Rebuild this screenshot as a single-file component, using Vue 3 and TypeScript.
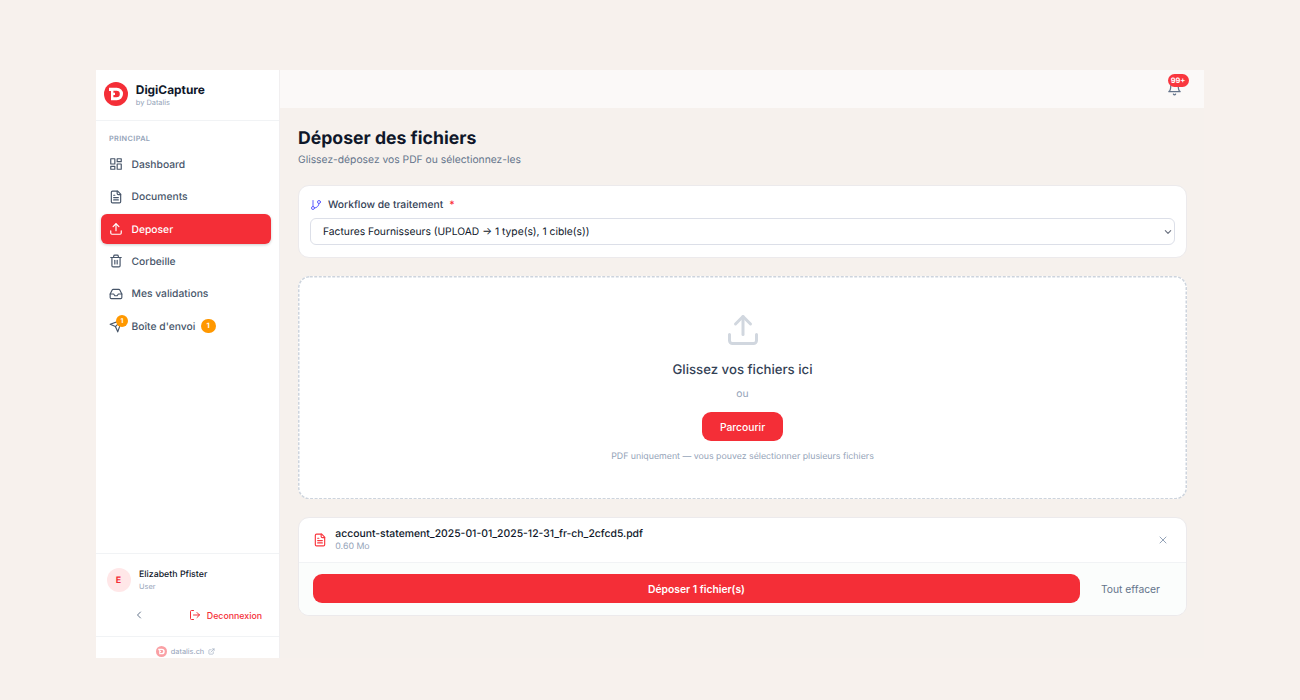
<script setup lang="ts">
import {ref} from "vue";

interface NavItem {
    label: string;
    icon: string[];
    badge?: number;
}

interface UploadFile {
    name: string;
    size: string;
}

const logoPath = "M5 5.800H12.800A6.200 6.200 0 0 1 12.800 18.200H7V9H5ZM9.400 8.800V10.800H11V13H9.400V15.200H12.600A3.200 3.200 0 0 0 12.600 8.800Z";

const iconDocument = [
    "M15 2H6a2 2 0 0 0-2 2v16a2 2 0 0 0 2 2h12a2 2 0 0 0 2-2V7Z",
    "M14 2v4a2 2 0 0 0 2 2h4",
    "M10 9H8",
    "M16 13H8",
    "M16 17H8",
];
const iconUpload = [
    "M21 15v4a2 2 0 0 1-2 2H5a2 2 0 0 1-2-2v-4",
    "M17 8l-5-5-5 5",
    "M12 3v12",
];

const navItems: NavItem[] = [
    {
        label: "Dashboard",
        icon: [
            "M3 3h7v9H3z",
            "M14 3h7v5h-7z",
            "M14 12h7v9h-7z",
            "M3 16h7v5H3z",
        ],
    },
    {label: "Documents", icon: iconDocument},
    {label: "Deposer", icon: iconUpload},
    {
        label: "Corbeille",
        icon: [
            "M3 6h18",
            "M19 6v14a2 2 0 0 1-2 2H7a2 2 0 0 1-2-2V6",
            "M8 6V4a2 2 0 0 1 2-2h4a2 2 0 0 1 2 2v2",
            "M10 11v6",
            "M14 11v6",
        ],
    },
    {
        label: "Mes validations",
        icon: [
            "M22 12h-6l-2 3h-4l-2-3H2",
            "M5.45 5.11 2 12v6a2 2 0 0 0 2 2h16a2 2 0 0 0 2-2v-6l-3.45-6.89A2 2 0 0 0 16.76 4H7.24a2 2 0 0 0-1.79 1.11z",
        ],
    },
    {
        label: "Boîte d'envoi",
        icon: ["m22 2-7 20-4-9-9-4Z", "M22 2 11 13"],
        badge: 1,
    },
];

const active = ref<string>("Deposer");
const workflow = ref<string>("Factures Fournisseurs (UPLOAD → 1 type(s), 1 cible(s))");
const files = ref<UploadFile[]>([
    {name: "account-statement_2025-01-01_2025-12-31_fr-ch_2cfcd5.pdf", size: "0.60 Mo"},
]);

function removeFile(index: number) {
    files.value.splice(index, 1);
}
</script>

<template>
    <div class="page">
        <div class="app">
            <aside class="sidebar">
                <div class="brand">
                    <svg class="brand-logo" viewBox="0 0 24 24">
                        <circle cx="12" cy="12" r="12" fill="#f42e37" />
                        <path :d="logoPath" fill="#fff" fill-rule="evenodd" />
                    </svg>
                    <div class="brand-text">
                        <div class="brand-name">DigiCapture</div>
                        <div class="brand-by">by Datalis</div>
                    </div>
                </div>
                <nav class="nav">
                    <div class="nav-title">PRINCIPAL</div>
                    <a
                        v-for="item in navItems"
                        :key="item.label"
                        class="nav-item"
                        :class="{active: item.label === active}"
                        @click="active = item.label"
                    >
                        <span class="nav-icon">
                            <svg class="icon" viewBox="0 0 24 24">
                                <path v-for="d in item.icon" :key="d" :d="d" />
                            </svg>
                            <span v-if="item.badge" class="icon-badge">{{ item.badge }}</span>
                        </span>
                        <span class="nav-label">{{ item.label }}</span>
                        <span v-if="item.badge" class="nav-badge">{{ item.badge }}</span>
                    </a>
                </nav>
                <div class="account">
                    <div class="user">
                        <div class="avatar">E</div>
                        <div>
                            <div class="user-name">Elizabeth Pfister</div>
                            <div class="user-role">User</div>
                        </div>
                    </div>
                    <div class="account-actions">
                        <button class="collapse">
                            <svg class="icon" viewBox="0 0 24 24"><path d="m15 18-6-6 6-6" /></svg>
                        </button>
                        <button class="logout">
                            <svg class="icon" viewBox="0 0 24 24">
                                <path d="M9 21H5a2 2 0 0 1-2-2V5a2 2 0 0 1 2-2h4" />
                                <path d="m16 17 5-5-5-5" />
                                <path d="M21 12H9" />
                            </svg>
                            Deconnexion
                        </button>
                    </div>
                </div>
                <div class="site">
                    <svg class="site-logo" viewBox="0 0 24 24">
                        <circle cx="12" cy="12" r="12" fill="#f42e37" />
                        <path :d="logoPath" fill="#fff" fill-rule="evenodd" />
                    </svg>
                    <span>datalis.ch</span>
                    <svg class="icon site-link" viewBox="0 0 24 24">
                        <path d="M15 3h6v6" />
                        <path d="M10 14 21 3" />
                        <path d="M18 13v6a2 2 0 0 1-2 2H5a2 2 0 0 1-2-2V8a2 2 0 0 1 2-2h6" />
                    </svg>
                </div>
            </aside>

            <div class="content">
                <header class="topbar">
                    <div class="bell">
                        <svg class="icon" viewBox="0 0 24 24">
                            <path d="M6 8a6 6 0 0 1 12 0c0 7 3 9 3 9H3s3-2 3-9" />
                            <path d="M10.300 21a1.940 1.940 0 0 0 3.400 0" />
                        </svg>
                        <span class="bell-badge">99+</span>
                    </div>
                </header>
                <main class="main">
                    <h1>Déposer des fichiers</h1>
                    <p class="subtitle">Glissez-déposez vos PDF ou sélectionnez-les</p>

                    <section class="card workflow">
                        <div class="workflow-label">
                            <svg class="icon" viewBox="0 0 24 24">
                                <path d="M6 3v12" />
                                <circle cx="18" cy="6" r="3" />
                                <circle cx="6" cy="18" r="3" />
                                <path d="M18 9a9 9 0 0 1-9 9" />
                            </svg>
                            <span>Workflow de traitement</span>
                            <span class="required">*</span>
                        </div>
                        <div class="select">
                            <span>{{ workflow }}</span>
                            <svg class="icon" viewBox="0 0 24 24"><path d="m4 8 8 8 8-8" /></svg>
                        </div>
                    </section>

                    <section class="dropzone">
                        <svg class="dropzone-border"><rect x="0.750" y="0.750" rx="11" /></svg>
                        <svg class="icon dropzone-icon" viewBox="0 0 24 24">
                            <path v-for="d in iconUpload" :key="d" :d="d" />
                        </svg>
                        <div class="dropzone-title">Glissez vos fichiers ici</div>
                        <div class="dropzone-or">ou</div>
                        <button class="browse">Parcourir</button>
                        <div class="dropzone-hint">PDF uniquement — vous pouvez sélectionner plusieurs fichiers</div>
                    </section>

                    <section class="card files">
                        <div v-for="(file, index) in files" :key="file.name" class="file">
                            <svg class="icon file-icon" viewBox="0 0 24 24">
                                <path v-for="d in iconDocument" :key="d" :d="d" />
                            </svg>
                            <div class="file-info">
                                <div class="file-name">{{ file.name }}</div>
                                <div class="file-size">{{ file.size }}</div>
                            </div>
                            <button class="remove" @click="removeFile(index)">
                                <svg class="icon" viewBox="0 0 24 24"><path d="M18 6 6 18M6 6l12 12" /></svg>
                            </button>
                        </div>
                        <div class="files-actions">
                            <button class="submit">Déposer {{ files.length }} fichier(s)</button>
                            <button class="clear" @click="files = []">Tout effacer</button>
                        </div>
                    </section>
                </main>
            </div>
        </div>
    </div>
</template>

<style>
body {
    margin: 0;
    background: #f7f1ed;
}
</style>

<style scoped>
.page {
    box-sizing: border-box;
    height: 700px;
    padding: 70px 96px 42px;
    overflow: hidden;
    background: #f7f1ed;
    font-family: Inter, "Liberation Sans", sans-serif;
    font-size: 10.3px;
    color: #0f172a;
    text-rendering: geometricPrecision;
}
.page * {
    box-sizing: border-box;
}
.app {
    display: flex;
    height: 588px;
    overflow: hidden;
    background: #f6f1ed;
}
button {
    display: flex;
    align-items: center;
    justify-content: center;
    padding: 0;
    border: 0;
    background: none;
    font: inherit;
    color: inherit;
}
.icon {
    display: block;
    flex: none;
    fill: none;
    stroke: currentColor;
    stroke-width: 2;
    stroke-linecap: round;
    stroke-linejoin: round;
}

/* sidebar */
.sidebar {
    display: flex;
    flex: none;
    flex-direction: column;
    width: 184px;
    height: 588px;
    overflow: hidden;
    border-right: 1px solid #f1eff0;
    background: #fff;
}
.brand {
    display: flex;
    flex: none;
    align-items: center;
    gap: 8.300px;
    height: 51px;
    padding: 0 7.500px;
    border-bottom: 1px solid #f1f3f5;
}
.brand-logo {
    width: 24px;
    height: 24px;
    margin-top: -1.100px;
}
.brand-name {
    font-size: 11.900px;
    font-weight: 700;
    line-height: 14px;
}
.brand-by {
    font-size: 7.400px;
    line-height: 11px;
    color: #94a3b8;
}
.nav {
    display: flex;
    flex: 1;
    flex-direction: column;
    gap: 3px;
    padding: 12px 8px 0 4.500px;
}
.nav-title {
    height: 13.500px;
    padding-left: 8.500px;
    font-size: 7.300px;
    font-weight: 600;
    line-height: 11px;
    letter-spacing: 0.370px;
    color: #94a3b8;
}
.nav-item {
    display: flex;
    align-items: center;
    height: 29.400px;
    padding-left: 8.500px;
    border-radius: 6px;
    font-weight: 500;
    color: #475569;
}
.nav-item.active {
    background: #f42e37;
    box-shadow: 0 1px 3px rgba(0, 0, 0, 0.2);
    color: #fff;
}
.nav-label {
    padding-top: 1.200px;
}
.nav-icon {
    position: relative;
    margin-right: 8px;
}
.nav-icon .icon {
    width: 14px;
    height: 14px;
    margin-right: 0.500px;
}
.icon-badge {
    position: absolute;
    top: -4px;
    right: -4.500px;
    width: 12px;
    height: 12px;
    border-radius: 50%;
    background: #ff9800;
    font-size: 6.600px;
    font-weight: 700;
    line-height: 12px;
    text-align: center;
    color: #fff;
}
.nav-badge {
    width: 14.700px;
    height: 14.700px;
    margin-left: 5.500px;
    border-radius: 50%;
    background: #ff9800;
    font-size: 7.400px;
    font-weight: 700;
    line-height: 14.700px;
    text-align: center;
    color: #fff;
}
.account {
    flex: none;
    height: 83px;
    border-top: 1px solid #f1f3f5;
}
.user {
    display: flex;
    align-items: center;
    gap: 8.500px;
    padding: 14px 10.500px 0;
}
.avatar {
    width: 24px;
    height: 24px;
    border-radius: 50%;
    background: #ffe7e8;
    font-size: 8.800px;
    font-weight: 700;
    line-height: 25px;
    text-align: center;
    color: #f42e37;
}
.user-name {
    padding-top: 1.400px;
    font-size: 8.800px;
    font-weight: 500;
    line-height: 12px;
}
.user-role {
    font-size: 7.400px;
    line-height: 11px;
    color: #94a3b8;
}
.account-actions {
    display: flex;
    align-items: center;
    justify-content: space-between;
    padding: 17px 17px 0 37px;
}
.collapse .icon {
    width: 12px;
    height: 12px;
    color: #64748b;
}
.logout {
    gap: 6px;
    font-size: 8.800px;
    font-weight: 500;
    color: #f42e37;
}
.logout .icon {
    width: 12px;
    height: 12px;
}
.site {
    display: flex;
    flex: none;
    align-items: center;
    justify-content: center;
    gap: 4px;
    height: 22px;
    padding: 7px 4px 0 0;
    border-top: 1px solid #f1f3f5;
    font-size: 7.400px;
    color: #94a3b8;
}
.site-logo {
    width: 11px;
    height: 11px;
    opacity: 0.45;
}
.site-link {
    width: 7px;
    height: 7px;
}

/* main column */
.content {
    display: flex;
    flex: 1;
    flex-direction: column;
}
.topbar {
    display: flex;
    flex: none;
    justify-content: flex-end;
    height: 38px;
    padding: 10.500px 22.500px 0 0;
    background: #fbf9f8;
}
.bell {
    position: relative;
    height: 15px;
    color: #64748b;
}
.bell .icon {
    width: 15px;
    height: 15px;
}
.bell-badge {
    position: absolute;
    top: -7px;
    left: 1px;
    width: 21px;
    height: 13.500px;
    border-radius: 7px;
    background: #f9373f;
    font-size: 7.400px;
    font-weight: 700;
    line-height: 13.500px;
    text-align: center;
    color: #fff;
}
.main {
    padding: 18px 17px 0 18px;
}
h1 {
    margin: 0;
    font-size: 17.650px;
    font-weight: 700;
    line-height: 25px;
}
.subtitle {
    margin: 2px 0 0;
    line-height: 15px;
    color: #64748b;
}
.card {
    border: 1px solid #eceaec;
    border-radius: 11px;
    background: #fff;
}
.workflow {
    height: 73px;
    margin-top: 17px;
    padding: 11.500px 11px 0;
}
.workflow-label {
    display: flex;
    align-items: center;
    gap: 6px;
    height: 14px;
    font-weight: 500;
    color: #334155;
}
.workflow-label .icon {
    width: 12px;
    height: 12px;
    color: #615fff;
}
.required {
    color: #fb2c36;
}
.select {
    display: flex;
    align-items: center;
    justify-content: space-between;
    height: 27px;
    margin-top: 6.500px;
    padding: 0 2px 0 12px;
    border: 1px solid #dcdfe8;
    border-radius: 6px;
}
.select .icon {
    width: 8px;
    height: 8px;
    stroke-width: 3.500;
    color: #6b7280;
}
.dropzone {
    position: relative;
    display: flex;
    flex-direction: column;
    align-items: center;
    height: 223.500px;
    margin-top: 17.500px;
    padding-top: 36px;
    border-radius: 12px;
    background: #fff;
}
.dropzone-border {
    position: absolute;
    inset: 0;
    width: 100%;
    height: 100%;
}
.dropzone-border rect {
    width: calc(100% - 1.500px);
    height: calc(100% - 1.500px);
    fill: none;
    stroke: #cdd4dd;
    stroke-width: 1.500;
    stroke-dasharray: 3 1.500;
}
.dropzone-icon {
    width: 36px;
    height: 36px;
    color: #d1d7df;
}
.dropzone-title {
    margin-top: 12px;
    font-size: 13.200px;
    font-weight: 500;
    line-height: 20px;
    color: #334155;
}
.dropzone-or {
    margin-top: 7px;
    line-height: 15px;
    color: #94a3b8;
}
.browse {
    width: 81px;
    height: 29.500px;
    margin-top: 10px;
    padding-top: 1px;
    border-radius: 9px;
    background: #f42e37;
    font-weight: 500;
    color: #fff;
}
.dropzone-hint {
    margin-top: 9px;
    font-size: 8.800px;
    line-height: 13px;
    color: #94a3b8;
}
.files {
    height: 99px;
    margin-top: 17.500px;
    overflow: hidden;
}
.file {
    display: flex;
    align-items: center;
    height: 44px;
    padding: 0 17px 0 14px;
}
.file-icon {
    width: 14px;
    height: 14px;
    color: #f9373f;
}
.file-info {
    flex: 1;
    padding-left: 8.300px;
}
.file-name {
    font-size: 10.400px;
    font-weight: 500;
    line-height: 14px;
}
.file-size {
    font-size: 8.800px;
    line-height: 12px;
    color: #94a3b8;
}
.remove .icon {
    width: 12px;
    height: 12px;
    color: #94a3b8;
}
.files-actions {
    display: flex;
    align-items: center;
    height: 53px;
    padding: 0 12px 0 14px;
    border-top: 1px solid #f1f3f5;
    background: #fbfdfc;
}
.submit {
    flex: 1;
    height: 29.500px;
    border-radius: 9px;
    background: #f42e37;
    font-weight: 600;
    color: #fff;
}
.clear {
    width: 94px;
    padding-left: 7px;
    color: #64748b;
}
</style>
